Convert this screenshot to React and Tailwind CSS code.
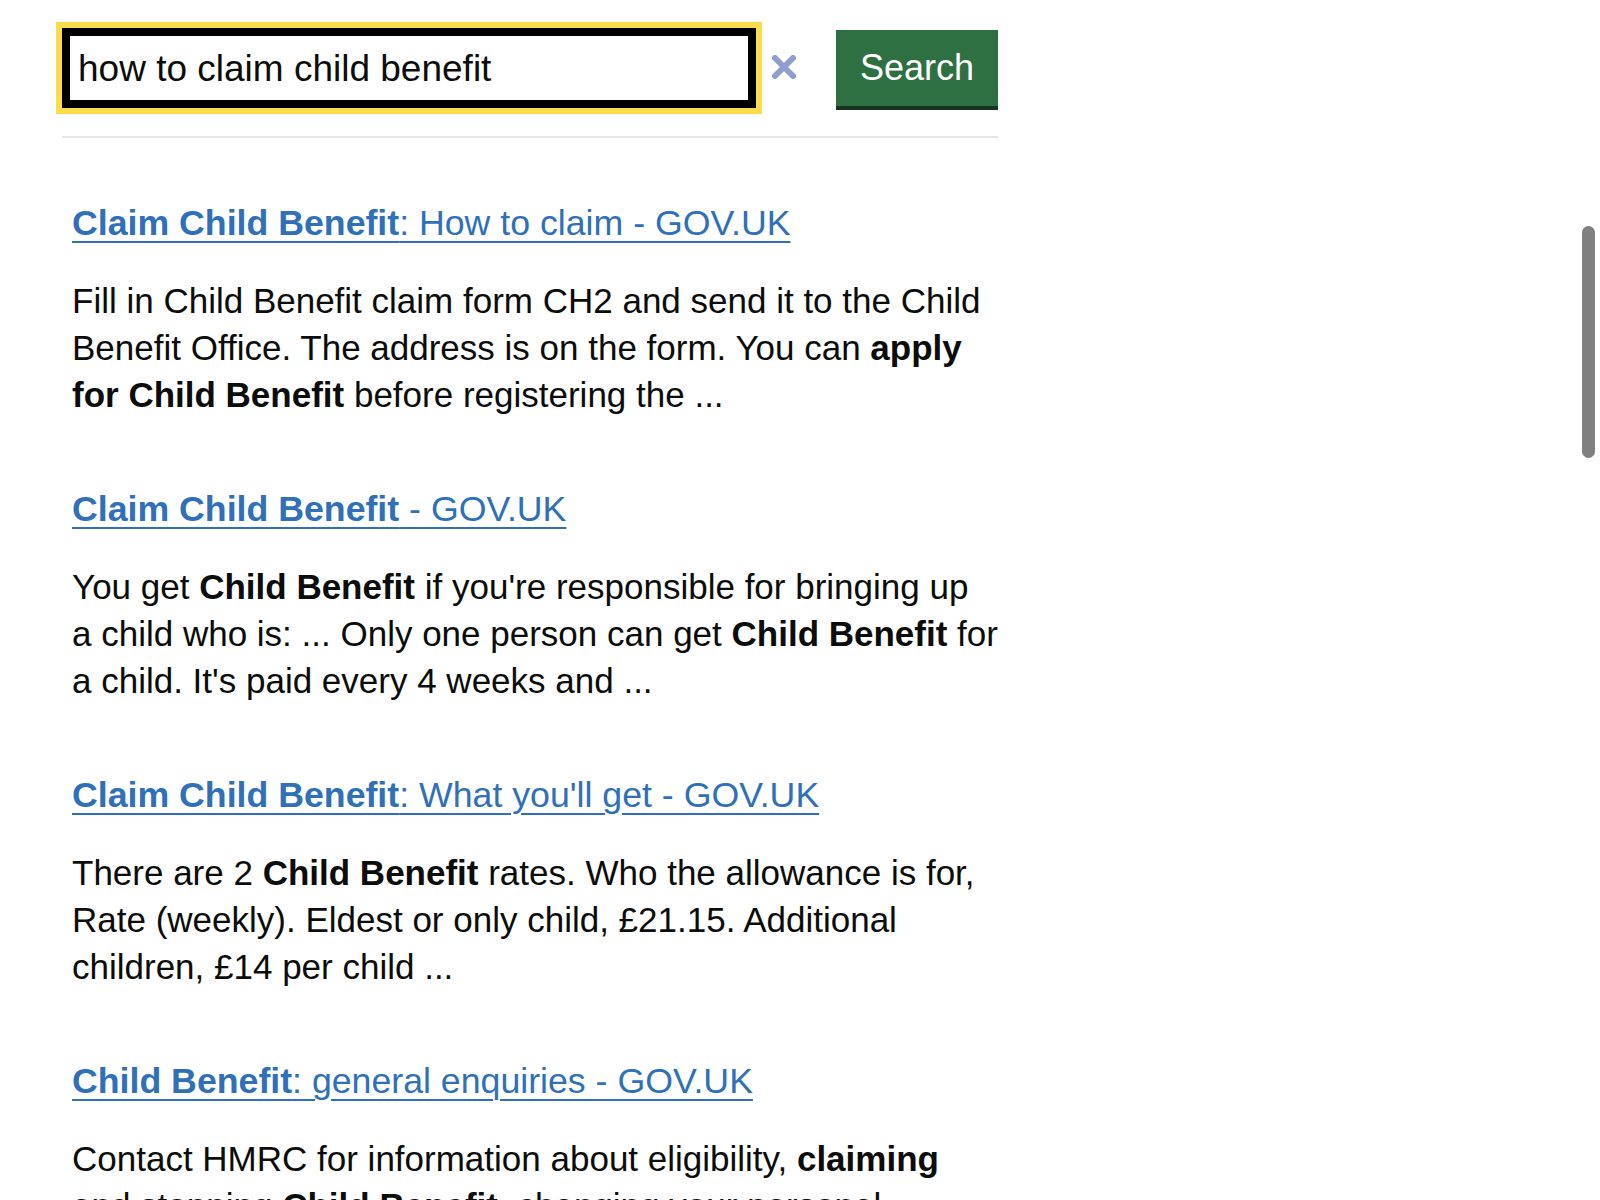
import React from "react";

const results = [
  {
    bold: "Claim Child Benefit",
    rest: ": How to claim - GOV.UK",
    lines: [
      [["Fill in Child Benefit claim form CH2 and send it to the Child"]],
      [["Benefit Office. The address is on the form. You can "], ["apply", true]],
      [["for Child Benefit", true], [" before registering the ..."]],
    ],
  },
  {
    bold: "Claim Child Benefit",
    rest: " - GOV.UK",
    lines: [
      [["You get "], ["Child Benefit", true], [" if you're responsible for bringing up"]],
      [["a child who is: ... Only one person can get "], ["Child Benefit", true], [" for"]],
      [["a child. It's paid every 4 weeks and ..."]],
    ],
  },
  {
    bold: "Claim Child Benefit",
    rest: ": What you'll get - GOV.UK",
    lines: [
      [["There are 2 "], ["Child Benefit", true], [" rates. Who the allowance is for,"]],
      [["Rate (weekly). Eldest or only child, £21.15. Additional"]],
      [["children, £14 per child ..."]],
    ],
  },
  {
    bold: "Child Benefit",
    rest: ": general enquiries - GOV.UK",
    lines: [
      [["Contact HMRC for information about eligibility, "], ["claiming", true]],
      [["and stopping "], ["Child Benefit", true], [", changing your personal"]],
    ],
  },
];

const Result = ({ item }) => (
  <li className="mb-[68px]">
    <a
      href="#"
      className="text-[35.7px] leading-[47px] text-[#2f70b8] underline decoration-2 underline-offset-[6px] whitespace-nowrap"
    >
      <span className="font-bold">{item.bold}</span>
      <span>{item.rest}</span>
    </a>
    <p className="mt-[30px] text-[35px] leading-[47px] text-[#0b0c0c]">
      {item.lines.map((line, i) => (
        <span key={i} className="block whitespace-nowrap">
          {line.map(([text, strong], j) =>
            strong ? (
              <strong key={j} className="font-bold">{text}</strong>
            ) : (
              <span key={j}>{text}</span>
            )
          )}
        </span>
      ))}
    </p>
  </li>
);

export default function App() {
  return (
    <div
      className="relative h-[1200px] overflow-hidden bg-white"
      style={{ fontFamily: '"Liberation Sans", Arial, sans-serif' }}
    >
      <div className="w-[998px] pl-[62px] pt-[28px]">
        <form className="flex items-start" onSubmit={(e) => e.preventDefault()}>
          <div className="flex h-[80px] w-[694px] items-center border-[8px] border-black bg-white pl-[8px] outline outline-[6px] outline-[#f9dd4a]">
            <span className="text-[37px] leading-none text-[#0b0c0c] whitespace-nowrap">
              how to claim child benefit
            </span>
          </div>
          <button type="button" className="ml-[16px] mt-[27px] flex h-[24px] w-[24px] items-center justify-center">
            <svg width="24" height="24" viewBox="0 0 24 24">
              <path d="M3 3 L21 21 M21 3 L3 21" stroke="#8f9ecc" strokeWidth="6" strokeLinecap="round" />
            </svg>
          </button>
          <button
            type="submit"
            className="ml-[40px] mt-[2px] h-[80px] w-[162px] border-b-[4px] border-[#173322] bg-[#2f7043] text-[36px] leading-none text-white"
          >
            Search
          </button>
        </form>
        <div className="mt-[26px] h-[2px] bg-[#e6e6e6]" />
        <ul className="mt-[62px] pl-[10px]">
          {results.map((r, i) => (
            <Result key={i} item={r} />
          ))}
        </ul>
      </div>
      <div className="absolute right-[5px] top-[226px] h-[232px] w-[13px] rounded-full bg-[#808080]" />
    </div>
  );
}
